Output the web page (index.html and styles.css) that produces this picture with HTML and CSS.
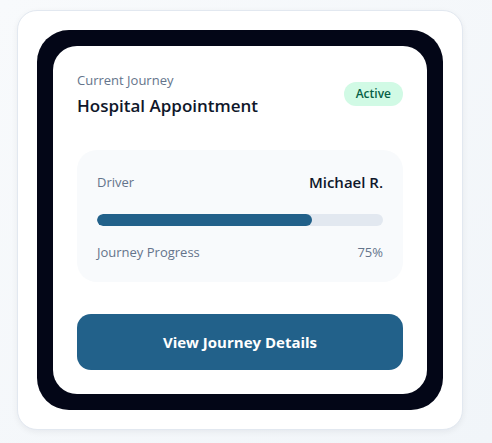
FILE: index.html
```html
<!DOCTYPE html>
<html>
<head>
<meta charset="utf-8">
<link rel="stylesheet" href="styles.css">
</head>
<body>
<div class="card">
  <div class="frame">
    <div class="screen">
      <div class="header">
        <div class="titles">
          <div class="eyebrow">Current Journey</div>
          <div class="title">Hospital Appointment</div>
        </div>
        <span class="badge">Active</span>
      </div>
      <div class="panel">
        <div class="row">
          <span class="label">Driver</span>
          <span class="driver">Michael R.</span>
        </div>
        <div class="track"><div class="fill" style="width:75%"></div></div>
        <div class="row row-small">
          <span class="label">Journey Progress</span>
          <span class="label">75%</span>
        </div>
      </div>
      <button class="btn">View Journey Details</button>
    </div>
  </div>
</div>
</body>
</html>
```

FILE: styles.css
```css
* { box-sizing: border-box; }
html, body { margin: 0; }
body {
  width: 492px;
  height: 443px;
  background: linear-gradient(135deg, #f8fafc 0%, #f1f5f9 100%);
  font-family: "Open Sans", "Noto Sans", sans-serif;
  padding: 10px 0 0 17px;
  overflow: hidden;
}
.card {
  width: 446px;
  background: #fff;
  border: 1px solid #e2e8f0;
  border-radius: 20px;
  padding: 19px;
  box-shadow: 0 2px 6px rgba(15, 23, 42, 0.06);
}
.frame {
  background: #030617;
  border-radius: 32px;
  padding: 16px;
}
.screen {
  background: #fff;
  border-radius: 24px;
  padding: 24px;
  display: flex;
  flex-direction: column;
  gap: 32px;
}
.header {
  display: flex;
  align-items: center;
  justify-content: space-between;
}
.titles { display: flex; flex-direction: column; gap: 4px; }
.eyebrow {
  font-size: 13px;
  line-height: 20px;
  color: #64748b;
}
.title {
  font-size: 17px;
  line-height: 24px;
  font-weight: 600;
  color: #0f172a;
}
.badge {
  background: #d1fae5;
  color: #065f46;
  font-size: 12px;
  font-weight: 600;
  height: 24px;
  line-height: 24px;
  padding: 0 12px;
  border-radius: 999px;
}
.panel {
  background: #f8fafc;
  border-radius: 20px;
  padding: 20px;
  display: flex;
  flex-direction: column;
}
.row {
  display: flex;
  justify-content: space-between;
  align-items: center;
  height: 24px;
}
.row-small { height: 20px; margin-top: 16px; }
.label {
  font-size: 13px;
  color: #64748b;
}
.driver {
  font-size: 15px;
  font-weight: 600;
  color: #0f172a;
}
.track {
  margin-top: 20px;
  height: 12px;
  background: #e2e8f0;
  border-radius: 6px;
  overflow: hidden;
}
.fill {
  height: 100%;
  background: #22618a;
  border-radius: 6px;
}
.btn {
  height: 56px;
  border: none;
  border-radius: 14px;
  background: #22618a;
  color: #fff;
  font-family: inherit;
  font-size: 15px;
  font-weight: 700;
  cursor: pointer;
}
```
